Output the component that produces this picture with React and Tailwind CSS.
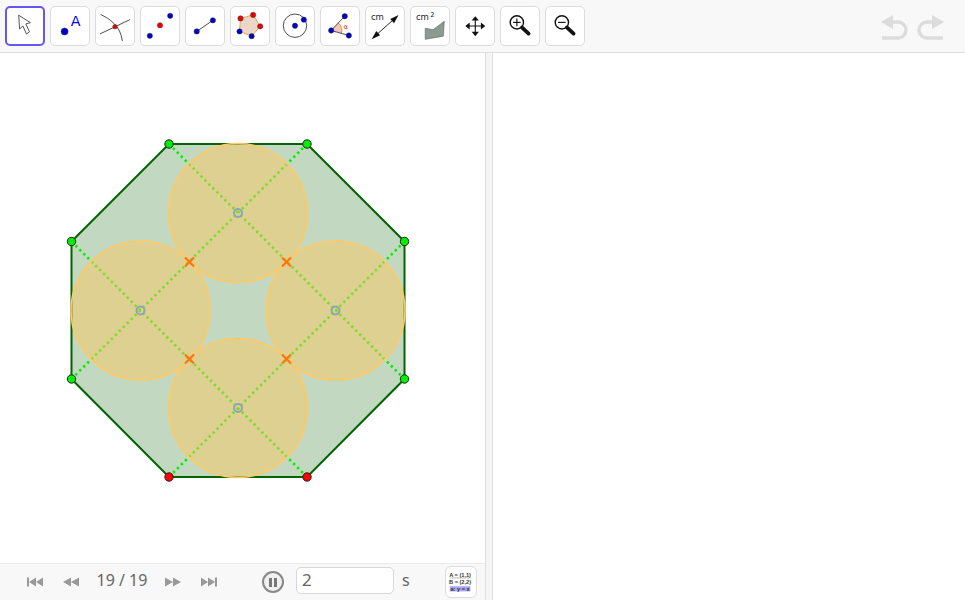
import React from 'react';

const BLUE = '#0000cc';
const RED = '#f00000';

const Dot = ({ x, y, r = 2.8, fill = BLUE }) => (
  <circle cx={x} cy={y} r={r} fill={fill} stroke="#333" strokeWidth="0.5" />
);

const ToolButton = ({ active, children }) => (
  <button
    className={
      active
        ? 'w-10 h-10 shrink-0 rounded-[5px] bg-white border-2 border-[#6557f5]'
        : 'w-10 h-10 shrink-0 rounded-[5px] bg-white border border-[#dcdcdc]'
    }
  >
    <svg viewBox="0 0 40 40" className="w-full h-full">
      {children}
    </svg>
  </button>
);

const Magnifier = ({ plus }) => (
  <>
    <circle cx="16.7" cy="16.2" r="7" fill="#fff" stroke="#111" strokeWidth="1.5" />
    <path d="M12.7 16.2h8" stroke="#111" strokeWidth="1.2" />
    {plus && <path d="M16.7 12.2v8" stroke="#111" strokeWidth="1.2" />}
    <path d="M22 21.5l7 6.5" stroke="#111" strokeWidth="4" strokeLinecap="round" />
  </>
);

const tools = [
  <path d="M13 8l1 15.5 3.6-3.6 4 9 3.4-2.4-4-8.8 5-1.4z" fill="#fff" stroke="#444" strokeWidth="1" />,
  <>
    <Dot x={14.3} y={25.7} r={3.7} />
    <text x="26" y="19.6" textAnchor="middle" fontSize="15" fill="#0000ee" fontFamily="'DejaVu Sans', sans-serif">A</text>
  </>,
  <>
    <path d="M4.3 28.3L35.7 13.3" stroke="#444" strokeWidth="1" />
    <path d="M5 8C14 12 26 20 27.7 35.7" fill="none" stroke="#444" strokeWidth="1" />
    <Dot x={20} y={20.7} r={2.4} fill={RED} />
  </>,
  <>
    <Dot x={9.3} y={30.3} />
    <Dot x={20} y={19.3} fill={RED} />
    <Dot x={30.7} y={9.3} />
  </>,
  <>
    <path d="M11.3 25.7L28.3 14" stroke="#444" strokeWidth="1" />
    <Dot x={11.3} y={25.7} />
    <Dot x={28.3} y={14} />
  </>,
  <>
    <path d="M10 12L23.3 8.3 30.7 20.3 21.7 30.7 9 25.7z" fill="#ecd6c8" stroke="#e0a050" strokeWidth="1" />
    <Dot x={10} y={12} fill={RED} />
    <Dot x={23.3} y={8.3} fill={RED} />
    <Dot x={30.7} y={20.3} fill={RED} />
    <Dot x={21.7} y={30.7} />
    <Dot x={9} y={25.7} />
  </>,
  <>
    <circle cx="20" cy="19.7" r="12.3" fill="none" stroke="#444" strokeWidth="1" />
    <Dot x={20} y={19.7} />
    <Dot x={29.3} y={13.3} />
  </>,
  <>
    <path d="M10.7 24.7L18 16.5A11 11 0 0 1 21.5 27.6z" fill="#f6c6c0" stroke="none" />
    <path d="M18 16.5A11 11 0 0 1 21.5 27.6" fill="none" stroke="#e09030" strokeWidth="1" />
    <path d="M25 9.7L10.7 24.7 29.3 30" fill="none" stroke="#444" strokeWidth="1" />
    <Dot x={10.7} y={24.7} />
    <Dot x={25} y={9.7} />
    <Dot x={29.3} y={30} />
    <text x="26" y="23" textAnchor="middle" fontSize="7" fill="#e02000" fontFamily="'DejaVu Sans', sans-serif">α</text>
  </>,
  <>
    <text x="12" y="14" textAnchor="middle" fontSize="9" fill="#222" fontFamily="'DejaVu Sans', sans-serif">cm</text>
    <path d="M9 31L31.5 11" stroke="#222" strokeWidth="1" />
    <path d="M34.3 8.3L25.5 12.5 29.5 17zM6 34L14.8 29.8 10.8 25.3z" fill="#111" />
  </>,
  <>
    <text x="12" y="14" textAnchor="middle" fontSize="9" fill="#222" fontFamily="'DejaVu Sans', sans-serif">cm</text>
    <text x="22.5" y="11" textAnchor="middle" fontSize="7" fill="#222" fontFamily="'DejaVu Sans', sans-serif">2</text>
    <path d="M15 22.3L23.3 24 35 15 34 30.7 15 34z" fill="#8c9a92" stroke="#66767a" strokeWidth="0.8" />
  </>,
  <>
    <path d="M20.3 13v14M13 20h14.6" stroke="#111" strokeWidth="1.2" />
    <path d="M20.3 9.7l-3.8 4.6h7.6zM20.3 30.7l-3.8-4.6h7.6zM9.8 20l4.6-3.8v7.6zM30.8 20l-4.6-3.8v7.6z" fill="#111" />
  </>,
  <Magnifier plus />,
  <Magnifier />,
];

// vertices of the octagon, clockwise from the top left
const octagon = [
  [169, 91],
  [307, 91],
  [404.5, 188.5],
  [404.5, 326],
  [307, 424],
  [169, 424],
  [71.5, 326],
  [71.5, 188.5],
];
const centers = [
  [238, 160],
  [140.5, 257.5],
  [335.5, 257.5],
  [238, 355],
];
const crossings = [
  [189.5, 209],
  [286.5, 209],
  [189.5, 306],
  [286.5, 306],
];
const diagonals = [
  [octagon[0], octagon[3]],
  [octagon[1], octagon[6]],
  [octagon[7], octagon[4]],
  [octagon[2], octagon[5]],
];

const Construction = () => (
  <svg viewBox="0 0 485 510" className="w-[485px] h-[510px] block">
    <polygon points={octagon.map((p) => p.join(',')).join(' ')} fill="#c2d8c0" stroke="#006400" strokeWidth="2" />
    {diagonals.map(([a, b], i) => (
      <line key={i} x1={a[0]} y1={a[1]} x2={b[0]} y2={b[1]} stroke="#00f000" strokeWidth="2.6" strokeDasharray="2.4 3.2" />
    ))}
    {centers.map(([x, y], i) => (
      <g key={i}>
        <circle cx={x} cy={y} r="69.5" fill="#fac85f" fillOpacity="0.5" stroke="#ffc966" strokeWidth="1.5" />
        <circle cx={x} cy={y} r="4" fill="none" stroke="#8fa5b5" strokeWidth="2" />
      </g>
    ))}
    {crossings.map(([x, y], i) => (
      <path key={i} d={`M${x - 4.5} ${y - 4.5}l9 9m0 -9l-9 9`} stroke="#ff7410" strokeWidth="2.2" />
    ))}
    {octagon.map(([x, y], i) => (
      <circle key={i} cx={x} cy={y} r="4.2" fill={i === 4 || i === 5 ? '#ff0000' : '#00ee00'} stroke="#222" strokeWidth="1" />
    ))}
  </svg>
);

const PlayIcon = ({ d }) => (
  <svg viewBox="0 0 20 14" className="w-5 h-[14px] shrink-0">
    <path d={d} fill="#999" />
  </svg>
);

export default function App() {
  return (
    <div className="w-[965px] h-screen flex flex-col bg-white overflow-hidden font-['Noto_Sans',sans-serif]">
      <div className="h-[53px] shrink-0 flex items-start pt-[6px] pl-[5px] gap-[5px] bg-[#f8f8f8] border-b border-[#e0e0e0]">
        {tools.map((icon, i) => (
          <ToolButton key={i} active={i === 0}>
            {icon}
          </ToolButton>
        ))}
        <div className="ml-auto mr-[20px] mt-[8px] flex gap-[5px]">
          <svg viewBox="0 0 30 26" className="w-[30px] h-[26px]">
            <path d="M12 8h6a8 8 0 0 1 0 16H2" fill="none" stroke="#dcdcdc" strokeWidth="3.4" />
            <path d="M1 8L13 1v14z" fill="#dcdcdc" />
          </svg>
          <svg viewBox="0 0 30 26" className="w-[30px] h-[26px]">
            <path d="M18 8h-6a8 8 0 0 0 0 16h16" fill="none" stroke="#dcdcdc" strokeWidth="3.4" />
            <path d="M29 8L17 1v14z" fill="#dcdcdc" />
          </svg>
        </div>
      </div>

      <div className="flex-1 flex min-h-0">
        <div className="w-[485px] shrink-0 flex flex-col">
          <div className="flex-1 min-h-0 overflow-hidden">
            <Construction />
          </div>
          <div className="h-[37px] shrink-0 flex items-center pl-[25px] bg-[#f8f8f8] border-t border-[#ececec] text-[#666]">
            <PlayIcon d="M2 2.500h2v9H2zM4 7l7-4.500v9zM11 7l7-4.500v9z" />
            <span className="w-4 shrink-0" />
            <PlayIcon d="M2 7l8-4.500v9zM10 7l8-4.500v9z" />
            <span className="w-[82px] shrink-0 text-center text-[16px] leading-none -mt-[4px]">19 / 19</span>
            <PlayIcon d="M2 2.500l8 4.500-8 4.500zM10 2.500l8 4.500-8 4.500z" />
            <span className="w-4 shrink-0" />
            <PlayIcon d="M2 2.500l7 4.500-7 4.500zM9 2.500l7 4.500-7 4.500zM16 2.500h2v9h-2z" />
            <button className="ml-[43px] w-[22px] h-[22px] shrink-0 rounded-full border-2 border-[#888] bg-[#f0f0f0] flex items-center justify-center gap-[2px]">
              <span className="w-[3px] h-[9px] bg-[#777]" />
              <span className="w-[3px] h-[9px] bg-[#777]" />
            </button>
            <div className="ml-[12px] w-[98px] h-[27px] shrink-0 rounded-[5px] bg-white border border-[#d8d8d8] pl-[5px] text-[17px] leading-[23px] -mt-[3px]">2</div>
            <span className="ml-[8px] text-[16px] leading-none -mt-[4px]">s</span>
            <button className="ml-auto mr-[8px] w-[32px] h-[32px] shrink-0 rounded-[6px] bg-white border border-[#dcdcdc] mt-[-1px]">
              <svg viewBox="0 0 32 32" className="w-full h-full font-['Liberation_Sans',sans-serif]">
                <text x="15" y="10.500" textAnchor="middle" fontSize="6" fontWeight="700" fill="#333">A = (1,1)</text>
                <path d="M4 11.700h22" stroke="#888" strokeWidth="0.6" />
                <text x="15" y="18" textAnchor="middle" fontSize="6" fontWeight="700" fill="#333">B = (2,2)</text>
                <rect x="4" y="20.500" width="22" height="5.500" fill="#a6a6f2" />
                <text x="15" y="25.300" textAnchor="middle" fontSize="6" fontWeight="700" fill="#333">a: y = x</text>
              </svg>
            </button>
          </div>
        </div>
        <div className="w-2 shrink-0 bg-[#f5f5f5] border-x border-[#dedede]" />
        <div className="flex-1 bg-white" />
      </div>
    </div>
  );
}
